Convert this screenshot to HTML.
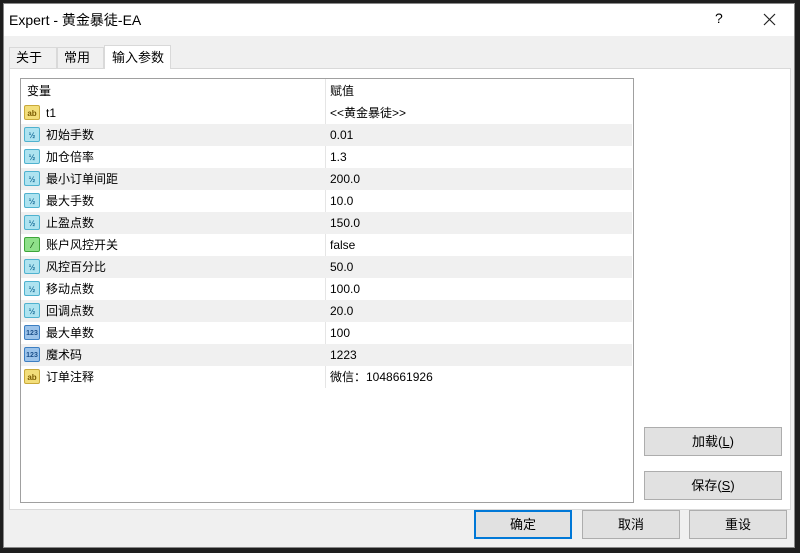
<!DOCTYPE html><html><head><meta charset="utf-8"><style>
body{margin:0;width:800px;height:553px;background:#1e1e1e;position:relative;overflow:hidden;font-family:"Liberation Sans","Noto Sans CJK SC",sans-serif;font-size:12px;color:#000}
.a{position:absolute}
.dlg{left:3px;top:3px;width:792px;height:545px;background:#f0f0f0;border:1px solid #888;box-sizing:border-box}
.btn{position:absolute;background:#e1e1e1;border:1px solid #adadad;box-sizing:border-box;text-align:center;font-size:13px}
.row{position:absolute;left:0;width:611px;height:22px;line-height:23px}
.row .n{position:absolute;left:25px}.row .v{position:absolute;left:309px}
.row.g{background:#f0f0f0}
.ic{position:absolute;left:3px;top:3px;width:16px;height:15px;border-radius:2px;font-size:8px;line-height:15px;text-align:center;font-weight:bold}
.ab{background:#f3de7a;border:1px solid #c9a93a;color:#7a5a00;box-sizing:border-box}
.hf{background:#aee3f0;border:1px solid #4fb2cf;color:#1a6f9a;box-sizing:border-box}
.nm{background:#9cc3ea;border:1px solid #3d7fc2;color:#1b4f8a;box-sizing:border-box;font-size:7px}
.bl{background:#8fe08a;border:1px solid #3ea53a;color:#1a5a16;box-sizing:border-box}
.tab{position:absolute;border:1px solid #d9d9d9;border-bottom:none;box-sizing:border-box;font-size:13px;line-height:20px}
</style></head><body>
<div class="a dlg"></div>
<div class="a" style="left:4px;top:4px;width:790px;height:32px;background:#fff"></div>
<div class="a" style="left:9px;top:10px;font-size:14px">Expert - 黄金暴徒-EA</div>
<div class="a" style="left:715px;top:10px;font-size:14px">?</div>
<svg class="a" style="left:763px;top:13px" width="13" height="13"><path d="M1 1L12 12M12 1L1 12" stroke="#222" stroke-width="1.2"/></svg>
<div class="a" style="left:9px;top:68px;width:782px;height:442px;background:#fff;border:1px solid #d9d9d9;box-sizing:border-box"></div>
<div class="tab" style="left:9px;top:47px;width:48px;height:21px;background:#f0f0f0;padding-left:6px">关于</div>
<div class="tab" style="left:57px;top:47px;width:47px;height:21px;background:#f0f0f0;padding-left:6px">常用</div>
<div class="tab" style="left:104px;top:45px;width:67px;height:24px;background:#fff;padding:2px 0 0 7px">输入参数</div>
<div class="a" style="left:20px;top:78px;width:614px;height:425px;border:1px solid #a0a0a0;background:#fff;box-sizing:border-box">
<div class="row" style="top:1px"><span class="n" style="left:6px">变量</span><span class="v">赋值</span></div>
<div class="a" style="left:304px;top:0;width:1px;height:309px;background:#e5e5e5"></div>
<div class="row" style="top:23px"><span class="ic ab">ab</span><span class="n">t1</span><span class="v">&lt;&lt;黄金暴徒&gt;&gt;</span></div>
<div class="row g" style="top:45px"><span class="ic hf">½</span><span class="n">初始手数</span><span class="v">0.01</span></div>
<div class="row" style="top:67px"><span class="ic hf">½</span><span class="n">加仓倍率</span><span class="v">1.3</span></div>
<div class="row g" style="top:89px"><span class="ic hf">½</span><span class="n">最小订单间距</span><span class="v">200.0</span></div>
<div class="row" style="top:111px"><span class="ic hf">½</span><span class="n">最大手数</span><span class="v">10.0</span></div>
<div class="row g" style="top:133px"><span class="ic hf">½</span><span class="n">止盈点数</span><span class="v">150.0</span></div>
<div class="row" style="top:155px"><span class="ic bl">⁄</span><span class="n">账户风控开关</span><span class="v">false</span></div>
<div class="row g" style="top:177px"><span class="ic hf">½</span><span class="n">风控百分比</span><span class="v">50.0</span></div>
<div class="row" style="top:199px"><span class="ic hf">½</span><span class="n">移动点数</span><span class="v">100.0</span></div>
<div class="row g" style="top:221px"><span class="ic hf">½</span><span class="n">回调点数</span><span class="v">20.0</span></div>
<div class="row" style="top:243px"><span class="ic nm">123</span><span class="n">最大单数</span><span class="v">100</span></div>
<div class="row g" style="top:265px"><span class="ic nm">123</span><span class="n">魔术码</span><span class="v">1223</span></div>
<div class="row" style="top:287px"><span class="ic ab">ab</span><span class="n">订单注释</span><span class="v">微信：1048661926</span></div>
</div>
<div class="btn" style="left:644px;top:427px;width:138px;height:29px;line-height:27px">加载(<u>L</u>)</div>
<div class="btn" style="left:644px;top:471px;width:138px;height:29px;line-height:27px">保存(<u>S</u>)</div>
<div class="btn" style="left:474px;top:510px;width:98px;height:29px;line-height:25px;border:2px solid #0078d7">确定</div>
<div class="btn" style="left:582px;top:510px;width:98px;height:29px;line-height:27px">取消</div>
<div class="btn" style="left:689px;top:510px;width:98px;height:29px;line-height:27px">重设</div>
</body></html>
